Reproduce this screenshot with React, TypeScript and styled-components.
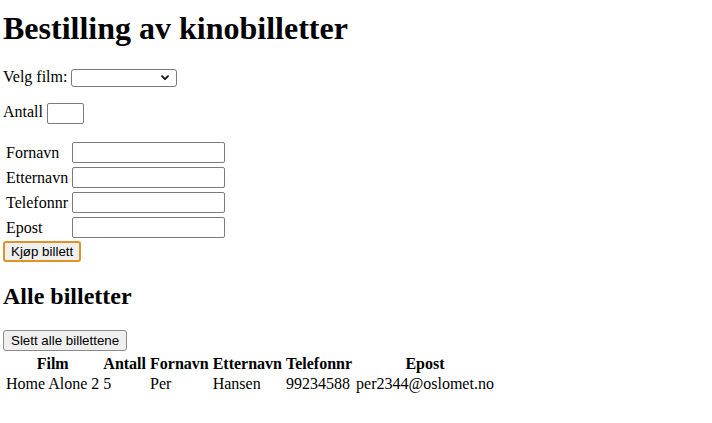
import React from "react";
import styled, { createGlobalStyle } from "styled-components";

const Global = createGlobalStyle`
  html, body { margin: 0; padding: 0; background: #fff; }
  body { font-family: "Liberation Serif", "Times New Roman", serif; font-size: 16px; color: #000; }
`;

const Page = styled.div`
  padding: 0 0 0 3px;
`;

const Title = styled.h1`
  margin: 10px 0 0;
  font-size: 32px;
  font-weight: 700;
  line-height: normal;
`;

const SubTitle = styled.h2`
  margin: 21px 0 20px;
  font-size: 24px;
  font-weight: 700;
  line-height: normal;
`;

const Row = styled.div<{ $top: number; $h: number }>`
  display: flex;
  align-items: flex-start;
  gap: 4px;
  margin-top: ${(p) => p.$top}px;
  height: ${(p) => p.$h}px;
`;

const Label = styled.span<{ $shift: number }>`
  margin-top: ${(p) => p.$shift}px;
  line-height: normal;
  white-space: nowrap;
`;

const SelectWrap = styled.span`
  position: relative;
  display: inline-block;
  width: 106px;
  height: 18px;
`;

const Select = styled.select`
  appearance: none;
  -webkit-appearance: none;
  box-sizing: border-box;
  width: 106px;
  height: 18px;
  margin: 0;
  padding: 0 4px;
  border: 1px solid #7a7a7a;
  border-radius: 3px;
  background: #fff;
  font: 13px "Liberation Sans", Arial, sans-serif;
`;

const Chevron = styled.svg`
  position: absolute;
  right: 8px;
  top: 7px;
  pointer-events: none;
`;

const TextInput = styled.input<{ $w: number }>`
  appearance: none;
  -webkit-appearance: none;
  display: block;
  box-sizing: border-box;
  width: ${(p) => p.$w}px;
  height: 21px;
  margin: 0;
  padding: 1px 2px;
  border: 1px solid #7a7a7a;
  border-radius: 2px;
  background: #fff;
  font: 13px "Liberation Sans", Arial, sans-serif;
`;

const FormTable = styled.table`
  margin-top: 15px;
  border-collapse: separate;
  border-spacing: 2px;
  td {
    padding: 1px;
    vertical-align: middle;
    line-height: normal;
    white-space: nowrap;
  }
`;

const Button = styled.button<{ $focus?: boolean }>`
  display: block;
  box-sizing: border-box;
  height: 21px;
  margin: 0;
  padding: 0 ${(p) => (p.$focus ? 6 : 7)}px;
  border: ${(p) => (p.$focus ? "2px solid #e09324" : "1px solid #8c8c8c")};
  border-radius: 3px;
  background: #efefef;
  color: #000;
  font: 13.33px "Liberation Sans", Arial, sans-serif;
  line-height: 1;
  white-space: nowrap;
`;

const ResultTable = styled.table`
  margin-top: 2px;
  border-collapse: separate;
  border-spacing: 2px;
  th, td {
    padding: 0 1px;
    line-height: 18px;
    white-space: nowrap;
  }
  th { font-weight: 700; text-align: center; }
  td { text-align: left; }
`;

const fields = ["Fornavn", "Etternavn", "Telefonnr", "Epost"];
const headers = ["Film", "Antall", "Fornavn", "Etternavn", "Telefonnr", "Epost"];
const tickets = [
  { film: "Home Alone 2", antall: "5", fornavn: "Per", etternavn: "Hansen", telefonnr: "99234588", epost: "per2344@oslomet.no" },
];

export default function App() {
  return (
    <Page>
      <Global />
      <Title>Bestilling av kinobilletter</Title>
      <Row $top={21} $h={18}>
        <Label $shift={0}>Velg film:</Label>
        <SelectWrap>
          <Select defaultValue="">
            <option value=""></option>
          </Select>
          <Chevron width="8" height="6" viewBox="0 0 8 6">
            <path d="M1 1.2 L4 4.2 L7 1.2" fill="none" stroke="#111" strokeWidth="1.8" strokeLinecap="round" strokeLinejoin="round" />
          </Chevron>
        </SelectWrap>
      </Row>
      <Row $top={17} $h={21}>
        <Label $shift={0}>Antall</Label>
        <TextInput $w={37} type="text" />
      </Row>
      <FormTable>
        <tbody>
          {fields.map((f) => (
            <tr key={f}>
              <td>{f}</td>
              <td>
                <TextInput $w={153} type="text" />
              </td>
            </tr>
          ))}
        </tbody>
      </FormTable>
      <Button $focus>Kjøp billett</Button>
      <SubTitle>Alle billetter</SubTitle>
      <Button>Slett alle billettene</Button>
      <ResultTable>
        <tbody>
          <tr>
            {headers.map((h) => (
              <th key={h}>{h}</th>
            ))}
          </tr>
          {tickets.map((t, i) => (
            <tr key={i}>
              <td>{t.film}</td>
              <td>{t.antall}</td>
              <td>{t.fornavn}</td>
              <td>{t.etternavn}</td>
              <td>{t.telefonnr}</td>
              <td>{t.epost}</td>
            </tr>
          ))}
        </tbody>
      </ResultTable>
    </Page>
  );
}
